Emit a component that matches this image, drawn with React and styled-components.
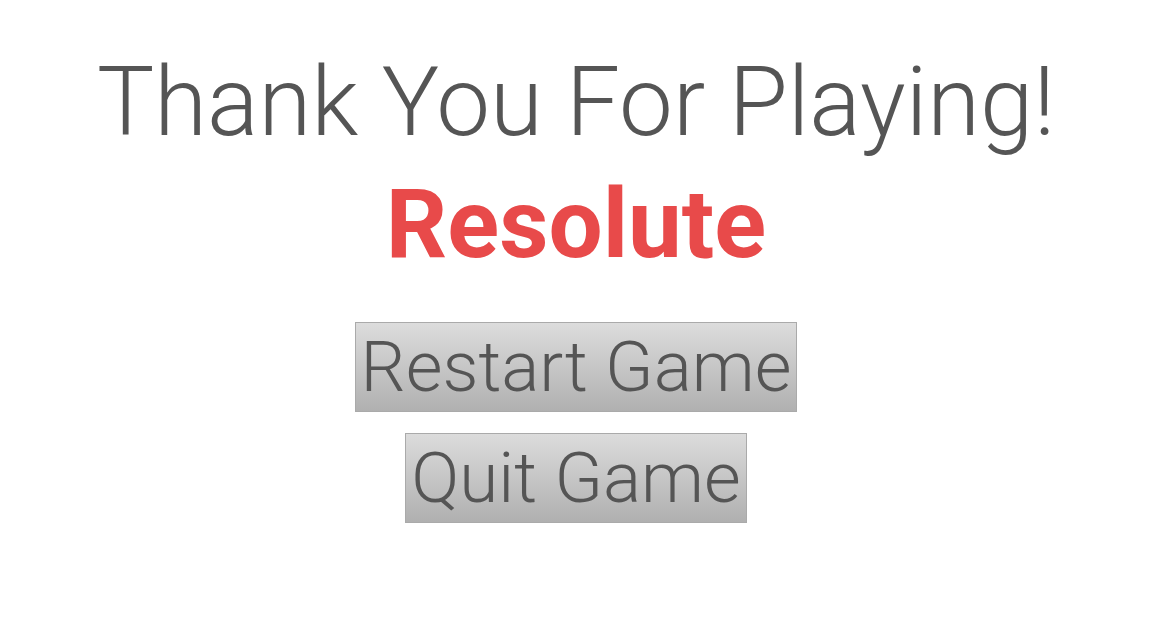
import React from "react";
import styled, { createGlobalStyle } from "styled-components";

const Global = createGlobalStyle`
  html, body { margin: 0; padding: 0; background: #fff; }
  body { font-family: Roboto, "Noto Sans", sans-serif; }
`;

const Page = styled.div`
  display: flex;
  flex-direction: column;
  align-items: center;
  padding-top: 42px;
`;

const Title = styled.h1`
  margin: 0;
  font-weight: 300;
  font-size: 96px;
  line-height: 120px;
  color: #555555;
`;

const GameName = styled.h2`
  margin: 2px 0 0;
  font-weight: 700;
  font-size: 96px;
  line-height: 120px;
  color: #e84a4a;
`;

const Menu = styled.div`
  display: flex;
  flex-direction: column;
  align-items: center;
  gap: 21px;
  margin-top: 38px;
`;

const Button = styled.button`
  font-family: Roboto, "Noto Sans", sans-serif;
  font-weight: 300;
  font-size: 71px;
  line-height: 88px;
  color: #555555;
  padding: 0 5px;
  border: 1px solid #aaaaaa;
  border-radius: 0;
  background: linear-gradient(to bottom, #dcdcdc, #b0b0b0);
  cursor: pointer;
`;

export default function App() {
  return (
    <>
      <Global />
      <Page>
        <Title>Thank You For Playing!</Title>
        <GameName>Resolute</GameName>
        <Menu>
          <Button>Restart Game</Button>
          <Button>Quit Game</Button>
        </Menu>
      </Page>
    </>
  );
}
